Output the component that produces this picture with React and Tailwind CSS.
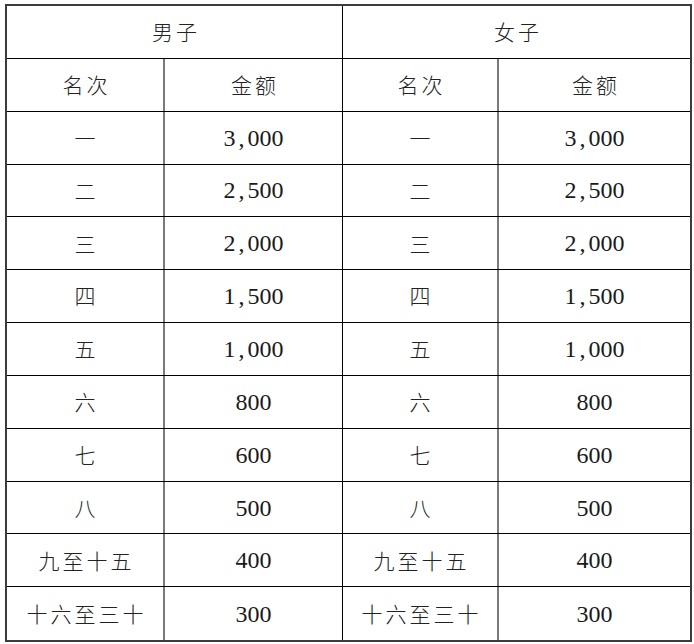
import React from "react";

const rows = [
  ["一", "3,000"],
  ["二", "2,500"],
  ["三", "2,000"],
  ["四", "1,500"],
  ["五", "1,000"],
  ["六", "800"],
  ["七", "600"],
  ["八", "500"],
  ["九至十五", "400"],
  ["十六至三十", "300"],
];

const cjk =
  "font-['Noto_Sans_CJK_SC','Noto_Sans',sans-serif] font-light text-[21px] tracking-[3px] pl-[3px] text-[#222]";
const serif = "font-['Liberation_Serif','DejaVu_Serif',serif] text-[24px] text-[#1a1a1a]";

const Amount = ({ value }) => {
  const parts = value.split(",");
  if (parts.length === 1) return <span>{value}</span>;
  return (
    <span>
      {parts[0]}
      <span className="inline-block w-[12px] text-center">,</span>
      {parts[1]}
    </span>
  );
};

const Cell = ({ className = "", children }) => (
  <div className={`h-full flex items-center justify-center ${className}`}>{children}</div>
);

const Row = ({ children, bottom = true }) => (
  <div className={`flex h-[52.85px] ${bottom ? "border-b border-black" : ""}`}>{children}</div>
);

export default function App() {
  return (
    <div className="w-[694px] h-[644px] bg-white pt-[4px] pl-[5px]">
      <div className="w-[687px] border-2 border-[#3c3c3c] bg-white">
        <Row>
          <Cell className={`w-[336px] border-r border-black ${cjk}`}>男子</Cell>
          <Cell className={`flex-1 ${cjk}`}>女子</Cell>
        </Row>
        <Row>
          <Cell className={`w-[158px] border-r-2 border-[#7a7a7a] ${cjk}`}>名次</Cell>
          <Cell className={`w-[178px] border-r border-black ${cjk}`}>金额</Cell>
          <Cell className={`w-[156px] border-r-2 border-[#7a7a7a] ${cjk}`}>名次</Cell>
          <Cell className={`flex-1 ${cjk}`}>金额</Cell>
        </Row>
        {rows.map(([rank, amount], i) => (
          <Row key={rank} bottom={i < rows.length - 1}>
            <Cell className={`w-[158px] border-r-2 border-[#7a7a7a] ${cjk}`}>{rank}</Cell>
            <Cell className={`w-[178px] border-r border-black ${serif}`}>
              <Amount value={amount} />
            </Cell>
            <Cell className={`w-[156px] border-r-2 border-[#7a7a7a] ${cjk}`}>{rank}</Cell>
            <Cell className={`flex-1 ${serif}`}>
              <Amount value={amount} />
            </Cell>
          </Row>
        ))}
      </div>
    </div>
  );
}
